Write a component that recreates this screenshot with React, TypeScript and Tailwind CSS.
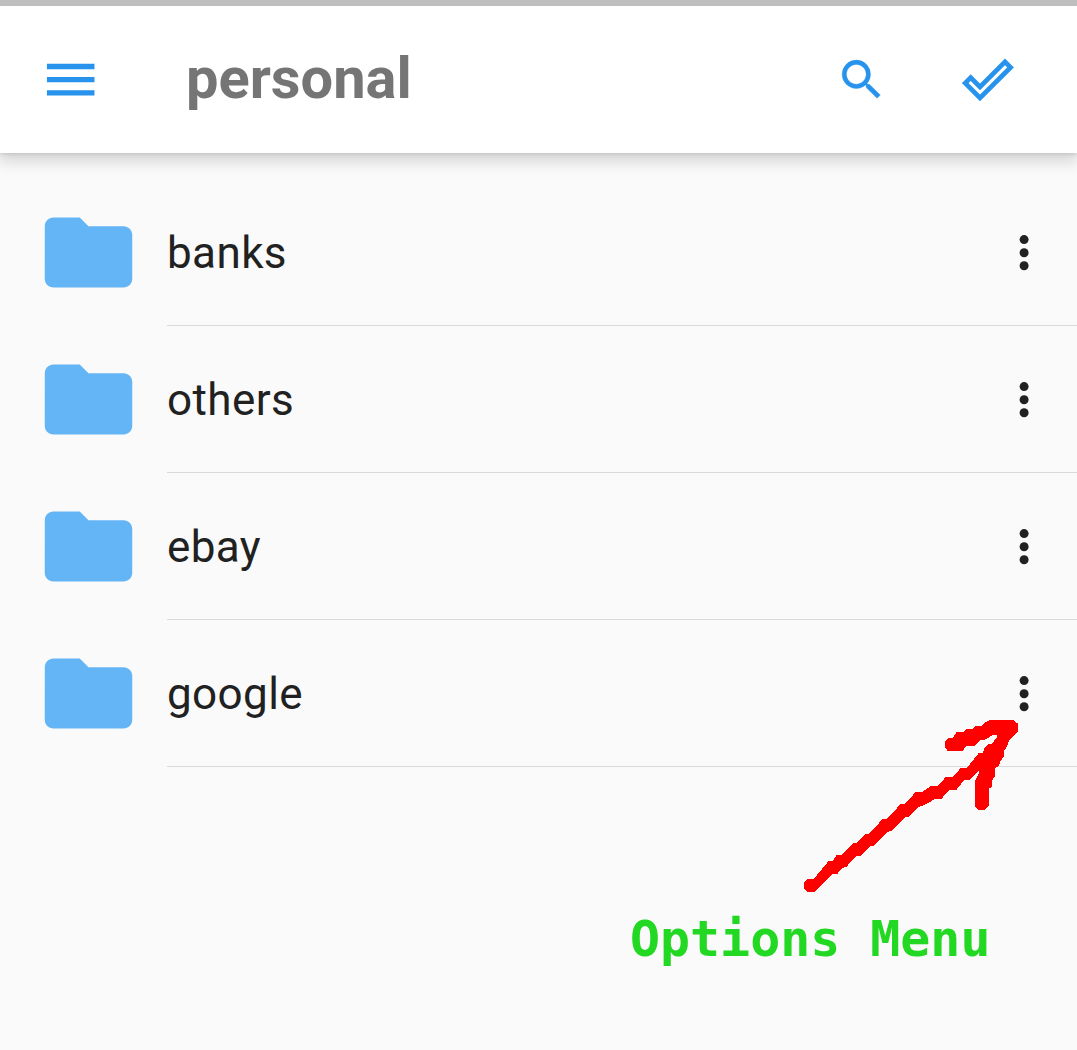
const folders = ["banks", "others", "ebay", "google"];

function FolderRow({ name }: { name: string }) {
  return (
    <li className="flex h-[147px] items-stretch">
      <div className="flex w-[167px] shrink-0 items-center pl-[36px]">
        <svg viewBox="0 0 24 24" className="size-[105px] fill-[#64b5f6]" aria-hidden="true">
          <path d="M10 4H4c-1.1 0-1.99.9-1.99 2L2 18c0 1.1.9 2 2 2h16c1.1 0 2-.9 2-2V8c0-1.1-.9-2-2-2h-8l-2-2z" />
        </svg>
      </div>
      <div className="flex flex-1 items-center justify-between border-b border-[#dadada] pr-[27px]">
        <span className="pt-[2px] text-[44px] leading-none tracking-[0.4px] text-[#212121]">{name}</span>
        <button aria-label={`Options for ${name}`}>
          <svg viewBox="0 0 52 52" className="size-[52px] fill-[#212121]">
            <circle cx="26.1" cy="13.6" r="4.5" />
            <circle cx="26.1" cy="26.7" r="4.5" />
            <circle cx="26.1" cy="39.8" r="4.5" />
          </svg>
        </button>
      </div>
    </li>
  );
}

export default function App() {
  return (
    <div className="relative flex h-[1050px] w-[1077px] flex-col overflow-hidden bg-[#fafafa] font-[Roboto,sans-serif]">
      <div className="relative z-10 h-[6px] shrink-0 bg-[#bfbfbf]" />
      <header className="flex h-[147px] shrink-0 items-center bg-white pr-[59px] pl-[39px] text-[#2793ec] shadow-[0_7px_14px_2px_rgba(0,0,0,0.14),0_1px_4px_rgba(0,0,0,0.13)]">
        <button aria-label="Menu">
          <svg viewBox="0 0 24 24" className="size-[63.4px] fill-current">
            <path d="M3 18h18v-2H3v2zm0-5h18v-2H3v2zm0-7v2h18V6H3z" />
          </svg>
        </button>
        <h1 className="ml-[83.6px] pb-[2px] text-[57.8px] leading-none font-bold text-[#757575]">personal</h1>
        <div className="ml-auto flex items-center">
          <button aria-label="Search" className="mr-[70px]">
            <svg viewBox="0.2 0.2 23.8 23.8" className="size-[52px] fill-current stroke-current stroke-[0.15]">
              <path d="M15.5 14h-.79l-.28-.27A6.471 6.471 0 0 0 16 9.5 6.5 6.5 0 1 0 9.5 16c1.61 0 3.09-.59 4.23-1.57l.27.28v.79l5 4.99L20.49 19l-4.99-5zm-6 0C7.01 14 5 11.99 5 9.5S7.01 5 9.5 5 14 7.01 14 9.5 11.99 14 9.5 14z" />
            </svg>
          </button>
          <button aria-label="Select">
            <svg viewBox="0 0 60 60" className="size-[60px] fill-none stroke-current stroke-[4.8]">
              <path d="M7.2 33.1L12.7 27.6L22 36.9L47 11.9L52.5 17.4L22 47.9Z" />
            </svg>
          </button>
        </div>
      </header>
      <ul className="pt-[26px]">
        {folders.map((name) => (
          <FolderRow key={name} name={name} />
        ))}
      </ul>
      <svg
        viewBox="800 715 225 180"
        className="absolute top-[715px] left-[800px] h-[180px] w-[225px] fill-[#ff0000] stroke-[#ff0000] stroke-1"
        strokeLinejoin="round"
        shapeRendering="crispEdges"
        aria-hidden="true"
      >
        <path d="M804.5 883L808 879.5H814L829 861.5H833L837 855.5H842L854 843.5H857L866 834.5H869L883 819.5H887L901 804.5H905L916 792.5H922L931 786.5H938L946 777.5H953L961 768.5H967L979 753.5H983L985 748L989 744.5H992L997 738V734L993 734.5L985 739H981L975 745H967L962 750.5H955L952 750.5H948L945.5 747V742L949 738.5H953L957 732.5H964L967 729.5H973L976 726.5H982L985 723L990 720.5H1013L1017.5 724V731L1009 739.5L1006 747L1003 752V757L1000 761L998.5 765L994 769V777L991 781V787L988 788V806L984 809.5H979L975.5 806V781L979 774V772L981 768L969 779.5H964L956 789.5H949L941 798.5H935L926 803.5L917 807.5L908 816.5H905L891 830.5L887 831.5L873 845.5H870L860 855.5H856L846 866.5L842 867.5L837 873.5H832L814 891.5H808L804.5 888Z" />
      </svg>
      <p className="absolute top-[910px] left-[630px] font-['DejaVu_Sans_Mono',monospace] text-[49.9px] leading-[58px] font-bold whitespace-pre text-[#22d822]">
        Options Menu
      </p>
    </div>
  );
}
